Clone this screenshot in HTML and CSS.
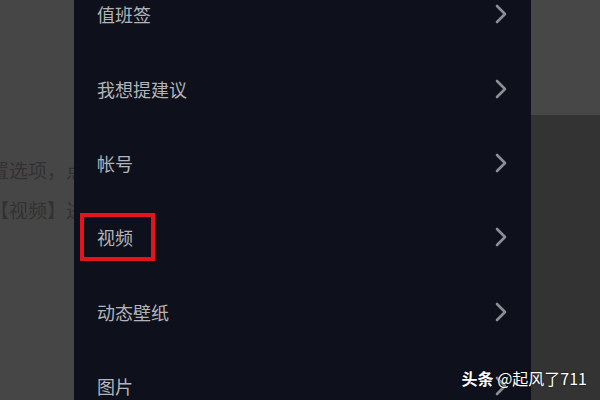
FILE: index.html
```html
<!DOCTYPE html>
<html lang="zh">
<head>
    <meta charset="UTF-8">
    <meta name="viewport" content="width=device-width, initial-scale=1.0">
    <title>设置</title>
    <link rel="stylesheet" href="styles.css">
</head>
<body>
    <div class="screen">
        <div class="side-left">
            <p class="bg-line">置选项，点</p>
            <p class="bg-line">【视频】进</p>
        </div>

        <ul class="menu">
            <li class="menu-item">
                <span class="label">值班签</span>
                <svg class="chevron" viewBox="0 0 14 20"><polyline points="3,2 11,10 3,18"/></svg>
            </li>
            <li class="menu-item">
                <span class="label">我想提建议</span>
                <svg class="chevron" viewBox="0 0 14 20"><polyline points="3,2 11,10 3,18"/></svg>
            </li>
            <li class="menu-item">
                <span class="label">帐号</span>
                <svg class="chevron" viewBox="0 0 14 20"><polyline points="3,2 11,10 3,18"/></svg>
            </li>
            <li class="menu-item">
                <span class="label highlight">视频</span>
                <svg class="chevron" viewBox="0 0 14 20"><polyline points="3,2 11,10 3,18"/></svg>
            </li>
            <li class="menu-item">
                <span class="label">动态壁纸</span>
                <svg class="chevron" viewBox="0 0 14 20"><polyline points="3,2 11,10 3,18"/></svg>
            </li>
            <li class="menu-item">
                <span class="label">图片</span>
                <svg class="chevron" viewBox="0 0 14 20"><polyline points="3,2 11,10 3,18"/></svg>
            </li>
        </ul>

        <div class="side-right">
            <div class="side-right-top"></div>
            <div class="side-right-bottom"></div>
        </div>
    </div>

    <div class="watermark"><strong>头条</strong> @起风了711</div>
</body>
</html>
```

FILE: styles.css
```css
body {
    margin: 0;
    padding: 0;
    overflow: hidden;
    font-family: 'Noto Sans CJK SC', 'Noto Sans', sans-serif;
    background: #464646;
}

.screen {
    display: flex;
    width: 600px;
    height: 400px;
    overflow: hidden;
}

.side-left {
    width: 74px;
    flex-shrink: 0;
    overflow: hidden;
    background: #464646;
    padding-top: 150px;
    box-sizing: border-box;
}

.bg-line {
    margin: 0 0 0 -10px;
    white-space: nowrap;
    font-size: 19px;
    line-height: 40px;
    color: #323232;
}

.menu {
    list-style: none;
    margin: -23px 0 0 0;
    padding: 0 23px;
    width: 457px;
    flex-shrink: 0;
    box-sizing: border-box;
    background: #0e111b;
}

.menu-item {
    display: flex;
    align-items: center;
    justify-content: space-between;
    height: 74.4px;
}

.label {
    font-size: 18px;
    color: #b3b4ba;
}

.highlight {
    display: inline-block;
    height: 40px;
    line-height: 40px;
    margin-left: -17px;
    padding: 0 18px 0 13px;
    border: 4px solid #e3141c;
}

.chevron {
    width: 14px;
    height: 20px;
    fill: none;
    stroke: #8c8e96;
    stroke-width: 2.6;
    stroke-linecap: round;
    stroke-linejoin: round;
}

.side-right {
    flex: 1;
    display: flex;
    flex-direction: column;
}

.side-right-top {
    height: 115px;
    background: #474747;
}

.side-right-bottom {
    flex: 1;
    background: #333333;
}

.watermark {
    position: absolute;
    right: 13px;
    bottom: 10px;
    font-size: 16px;
    color: #fff;
    text-shadow: 0 0 2px rgba(0, 0, 0, 0.8);
}

.watermark strong {
    font-weight: bold;
}
```
